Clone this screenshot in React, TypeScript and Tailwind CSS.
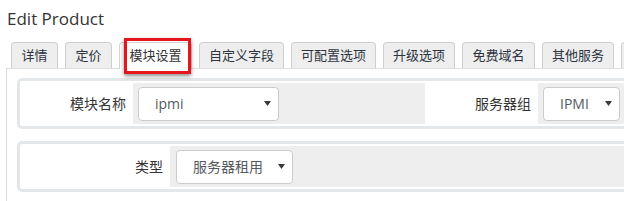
import React from "react";

const tabs: { label: string; w: string; active?: boolean }[] = [
  { label: "详情", w: "w-[47px]" },
  { label: "定价", w: "w-[47px]" },
  { label: "模块设置", w: "w-[73px]", active: true },
  { label: "自定义字段", w: "w-[85px]" },
  { label: "可配置选项", w: "w-[85px]" },
  { label: "升级选项", w: "w-[72px]" },
  { label: "免费域名", w: "w-[73px]" },
  { label: "其他服务", w: "w-[72px]" },
  { label: "", w: "w-[60px]" },
];

function Caret() {
  return (
    <svg width="7" height="5" viewBox="0 0 7 5" className="shrink-0">
      <path d="M0 0 H7 L3.5 5 Z" fill="#3a3a3a" />
    </svg>
  );
}

function Select({ value, w }: { value: string; w: string }) {
  return (
    <div
      className={`${w} h-[34px] bg-white border border-[#cccccc] rounded-[4px] flex items-center justify-between pl-[16px] pr-[7px] text-[14px] text-[#555a60]`}
    >
      <span>{value}</span>
      <Caret />
    </div>
  );
}

export default function App() {
  return (
    <div className="w-[624px] h-[201px] overflow-hidden bg-white font-['Open_Sans','Noto_Sans_CJK_SC',sans-serif] text-[#333]">
      <div className="w-[760px] relative">
        <h1 className="pl-[7px] pt-[7px] text-[17px] leading-[23px] font-normal text-[#333]">
          Edit Product
        </h1>
        <div className="flex gap-[7px] pl-[11px] mt-[12px] relative z-10">
          {tabs.map((t, i) =>
            t.active ? (
              <div
                key={i}
                className={`${t.w} h-[27px] -mb-px bg-white border-t border-x border-[#d4d4d4] rounded-t-[4px] flex items-center justify-center text-[13px] text-[#333]`}
              >
                {t.label}
              </div>
            ) : (
              <div
                key={i}
                className={`${t.w} h-[26px] bg-[#eeeeee] border-t border-x border-[#cfcfcf] rounded-t-[4px] flex items-center justify-center text-[13px] text-[#2d3340]`}
              >
                {t.label}
              </div>
            )
          )}
        </div>
        <div className="ml-[6px] border-l border-t border-[#dddddd] pl-[10px] pt-[9px] pb-[20px]">
          <div className="h-[51px] border-[3px] border-[#e3e7e9] rounded-[5px] py-[2px] flex text-[14px]">
            <div className="w-[113px] flex items-center justify-end pr-[7px] text-[#333]">
              模块名称
            </div>
            <div className="w-[292px] bg-[#eeeeee] flex items-center pl-[5px]">
              <Select value="ipmi" w="w-[141px]" />
            </div>
            <div className="w-[113px] flex items-center justify-end pr-[7px] text-[#333]">
              服务器组
            </div>
            <div className="flex-1 bg-[#eeeeee] flex items-center pl-[5px]">
              <Select value="IPMI" w="w-[77px]" />
            </div>
          </div>
          <div className="mt-[12px] h-[51px] border-[3px] border-[#e3e7e9] rounded-[5px] py-[2px] flex text-[14px]">
            <div className="w-[150px] flex items-center justify-end pr-[7px] text-[#333]">
              类型
            </div>
            <div className="flex-1 bg-[#eeeeee] flex items-center pl-[6px]">
              <Select value="服务器租用" w="w-[117px]" />
            </div>
          </div>
        </div>
        <div className="absolute left-[124px] top-[38px] w-[67px] h-[36px] border-[3px] border-[#e4161b] shadow-[0_2px_4px_rgba(0,0,0,0.45)] z-20" />
      </div>
    </div>
  );
}
